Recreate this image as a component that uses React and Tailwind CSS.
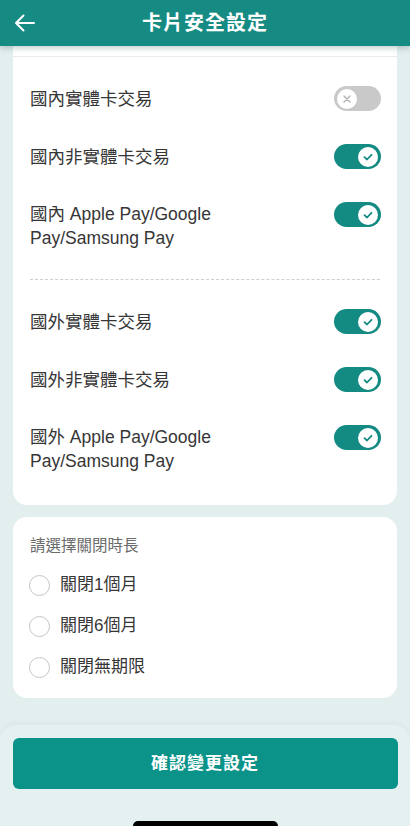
import React, { useState } from 'react';

const font = { fontFamily: '"Liberation Sans", "Noto Sans CJK TC", sans-serif' };

function Toggle({ on }) {
  return (
    <div
      className={`w-[47px] h-[25px] rounded-full flex items-center px-[3px] shrink-0 ${on ? 'bg-[#138a82] justify-end' : 'bg-[#c9c9c9] justify-start'}`}
    >
      <div className="w-[20px] h-[20px] rounded-full bg-white flex items-center justify-center">
        {on ? (
          <svg width="12" height="12" viewBox="0 0 12 12" fill="none">
            <path d="M2.5 6.2 L5 8.5 L9.5 3.8" stroke="#138a82" strokeWidth="1.8" strokeLinecap="round" strokeLinejoin="round" />
          </svg>
        ) : (
          <svg width="10" height="10" viewBox="0 0 10 10" fill="none">
            <path d="M2 2 L8 8 M8 2 L2 8" stroke="#b5b5b5" strokeWidth="1.5" strokeLinecap="round" />
          </svg>
        )}
      </div>
    </div>
  );
}

function Row({ label, on, tall }) {
  return (
    <div className={`flex justify-between pl-[17px] pr-[16px] ${tall ? 'items-start' : 'items-center'}`}>
      <div className="text-[17.5px] leading-[24px] text-[#363636]">{label}</div>
      <Toggle on={on} />
    </div>
  );
}

export default function App() {
  const [period, setPeriod] = useState(null);
  const options = ['關閉1個月', '關閉6個月', '關閉無期限'];

  return (
    <div className="w-[410px] h-[826px] bg-[#e3eeee] flex flex-col overflow-hidden" style={font}>
      <header className="h-[46px] bg-[#168b83] flex items-center relative shrink-0 shadow-[0_2px_6px_rgba(0,60,60,0.25)] z-10">
        <svg className="ml-[13px]" width="24" height="24" viewBox="0 0 24 24" fill="none">
          <path d="M21 12 H3.5 M10.5 4.5 L3 12 L10.5 19.5" stroke="white" strokeWidth="2" strokeLinecap="round" strokeLinejoin="round" />
        </svg>
        <div className="absolute left-0 right-0 text-center text-white text-[20px] font-bold tracking-[1px] pointer-events-none">卡片安全設定</div>
      </header>

      <div className="flex-1 flex flex-col">
        <section className="mx-[13px] bg-white rounded-b-[14px] pb-[32px]">
          <div className="h-[11px] border-b border-[#ece8ec]" />
          <div className="pt-[29px] flex flex-col gap-[33px]">
            <Row label="國內實體卡交易" on={false} />
            <Row label="國內非實體卡交易" on />
            <Row label={<>國內 Apple Pay/Google<br />Pay/Samsung Pay</>} on tall />
          </div>
          <div className="mx-[17px] my-[29px] border-t border-dashed border-[#cfcfcf]" />
          <div className="flex flex-col gap-[33px]">
            <Row label="國外實體卡交易" on />
            <Row label="國外非實體卡交易" on />
            <Row label={<>國外 Apple Pay/Google<br />Pay/Samsung Pay</>} on tall />
          </div>
        </section>

        <section className="mx-[13px] mt-[12px] bg-white rounded-[14px] pl-[16px] pr-[17px] pt-[18px] pb-[20px]">
          <div className="pl-[1px] text-[15.5px] leading-[22px] text-[#6b6b6b]">請選擇關閉時長</div>
          <div className="mt-[17px] flex flex-col gap-[19px]">
            {options.map(o => (
              <button key={o} onClick={() => setPeriod(o)} className="flex items-center gap-[10px] text-left">
                <span className={`w-[21px] h-[21px] rounded-full border ${period === o ? 'border-[#138a82] border-[6px]' : 'border-[#c4c4c4]'}`} />
                <span className="text-[17px] leading-[22px] text-[#363636]">{o}</span>
              </button>
            ))}
          </div>
        </section>
      </div>

      <footer className="h-[101px] bg-[#e5f0f0] rounded-t-[16px] shadow-[0_-2px_6px_rgba(0,0,0,0.04)] flex flex-col items-center pt-[13px] shrink-0">
        <button className="w-[385px] h-[51px] rounded-[6px] bg-[#0b9289] text-white text-[17px] font-bold tracking-[1px]">確認變更設定</button>
        <div className="mt-auto w-[145px] h-[5px] rounded-t-full bg-black" />
      </footer>
    </div>
  );
}
